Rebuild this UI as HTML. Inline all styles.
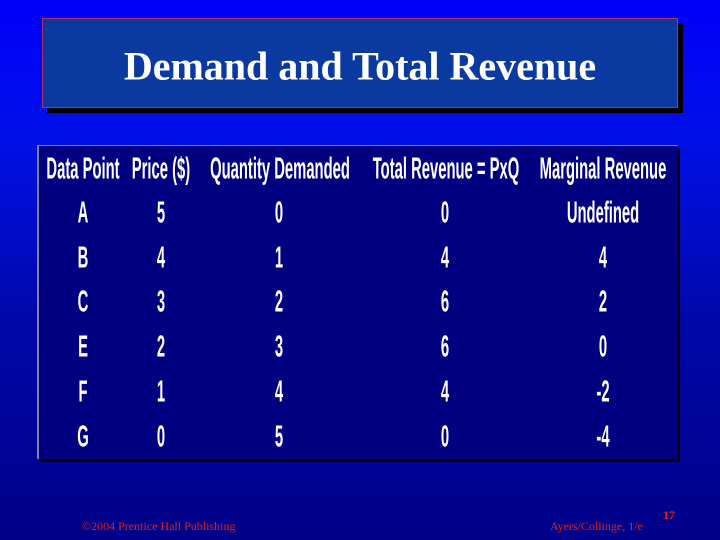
<!DOCTYPE html>
<html><head><style>
html,body{margin:0;padding:0}
body{width:720px;height:540px;position:relative;overflow:hidden;
background:linear-gradient(to bottom,#0000fa 0%,#0010e8 25%,#0008a8 60%,#000088 100%);}
.title{position:absolute;left:42px;top:18px;width:634px;height:88px;background:#0a3aa0;border:1px solid #b03060;box-shadow:5px 5px 0 #000;}
.title div{position:absolute;left:0;right:0;top:47px;text-align:center;font:bold 40px "Liberation Serif",serif;color:#fff;transform:translateY(-50%);}
.tbl{position:absolute;left:37px;top:145px;width:639px;height:313px;background:#000080;border-left:2px solid #8080a0;border-top:1px solid #8080a0;box-shadow:2px 3px 0 #000;}
.c{position:absolute;color:#fff;font:bold 20px "Liberation Sans Narrow","Liberation Sans",sans-serif;white-space:nowrap;transform:translate(-50%,-50%) scale(0.74,1.55);}
.f{position:absolute;font:12px "Liberation Serif",serif;color:#e02020;}
</style></head><body>
<div class="title"><div>Demand and Total Revenue</div></div>
<div class="tbl"></div>
<div class="c" style="left:83px;top:170px">Data Point</div>
<div class="c" style="left:161px;top:170px">Price ($)</div>
<div class="c" style="left:280px;top:170px">Quantity Demanded</div>
<div class="c" style="left:446px;top:170px">Total Revenue = PxQ</div>
<div class="c" style="left:603px;top:170px">Marginal Revenue</div>

<div class="c" style="left:83px;top:214px">A</div><div class="c" style="left:161px;top:214px">5</div><div class="c" style="left:279px;top:214px">0</div><div class="c" style="left:445px;top:214px">0</div><div class="c" style="left:603px;top:214px">Undefined</div>
<div class="c" style="left:83px;top:259px">B</div><div class="c" style="left:161px;top:259px">4</div><div class="c" style="left:279px;top:259px">1</div><div class="c" style="left:445px;top:259px">4</div><div class="c" style="left:603px;top:259px">4</div>
<div class="c" style="left:83px;top:303px">C</div><div class="c" style="left:161px;top:303px">3</div><div class="c" style="left:279px;top:303px">2</div><div class="c" style="left:445px;top:303px">6</div><div class="c" style="left:603px;top:303px">2</div>
<div class="c" style="left:83px;top:348px">E</div><div class="c" style="left:161px;top:348px">2</div><div class="c" style="left:279px;top:348px">3</div><div class="c" style="left:445px;top:348px">6</div><div class="c" style="left:603px;top:348px">0</div>
<div class="c" style="left:83px;top:393px">F</div><div class="c" style="left:161px;top:393px">1</div><div class="c" style="left:279px;top:393px">4</div><div class="c" style="left:445px;top:393px">4</div><div class="c" style="left:603px;top:393px">-2</div>
<div class="c" style="left:83px;top:438px">G</div><div class="c" style="left:161px;top:438px">0</div><div class="c" style="left:279px;top:438px">5</div><div class="c" style="left:445px;top:438px">0</div><div class="c" style="left:603px;top:438px">-4</div>

<div class="f" style="left:82px;top:519px">©2004 Prentice Hall Publishing</div>
<div class="f" style="left:550px;top:519px">Ayers/Collinge, 1/e</div>
<div class="f" style="left:663px;top:508px;font-weight:bold">17</div>
</body></html>
